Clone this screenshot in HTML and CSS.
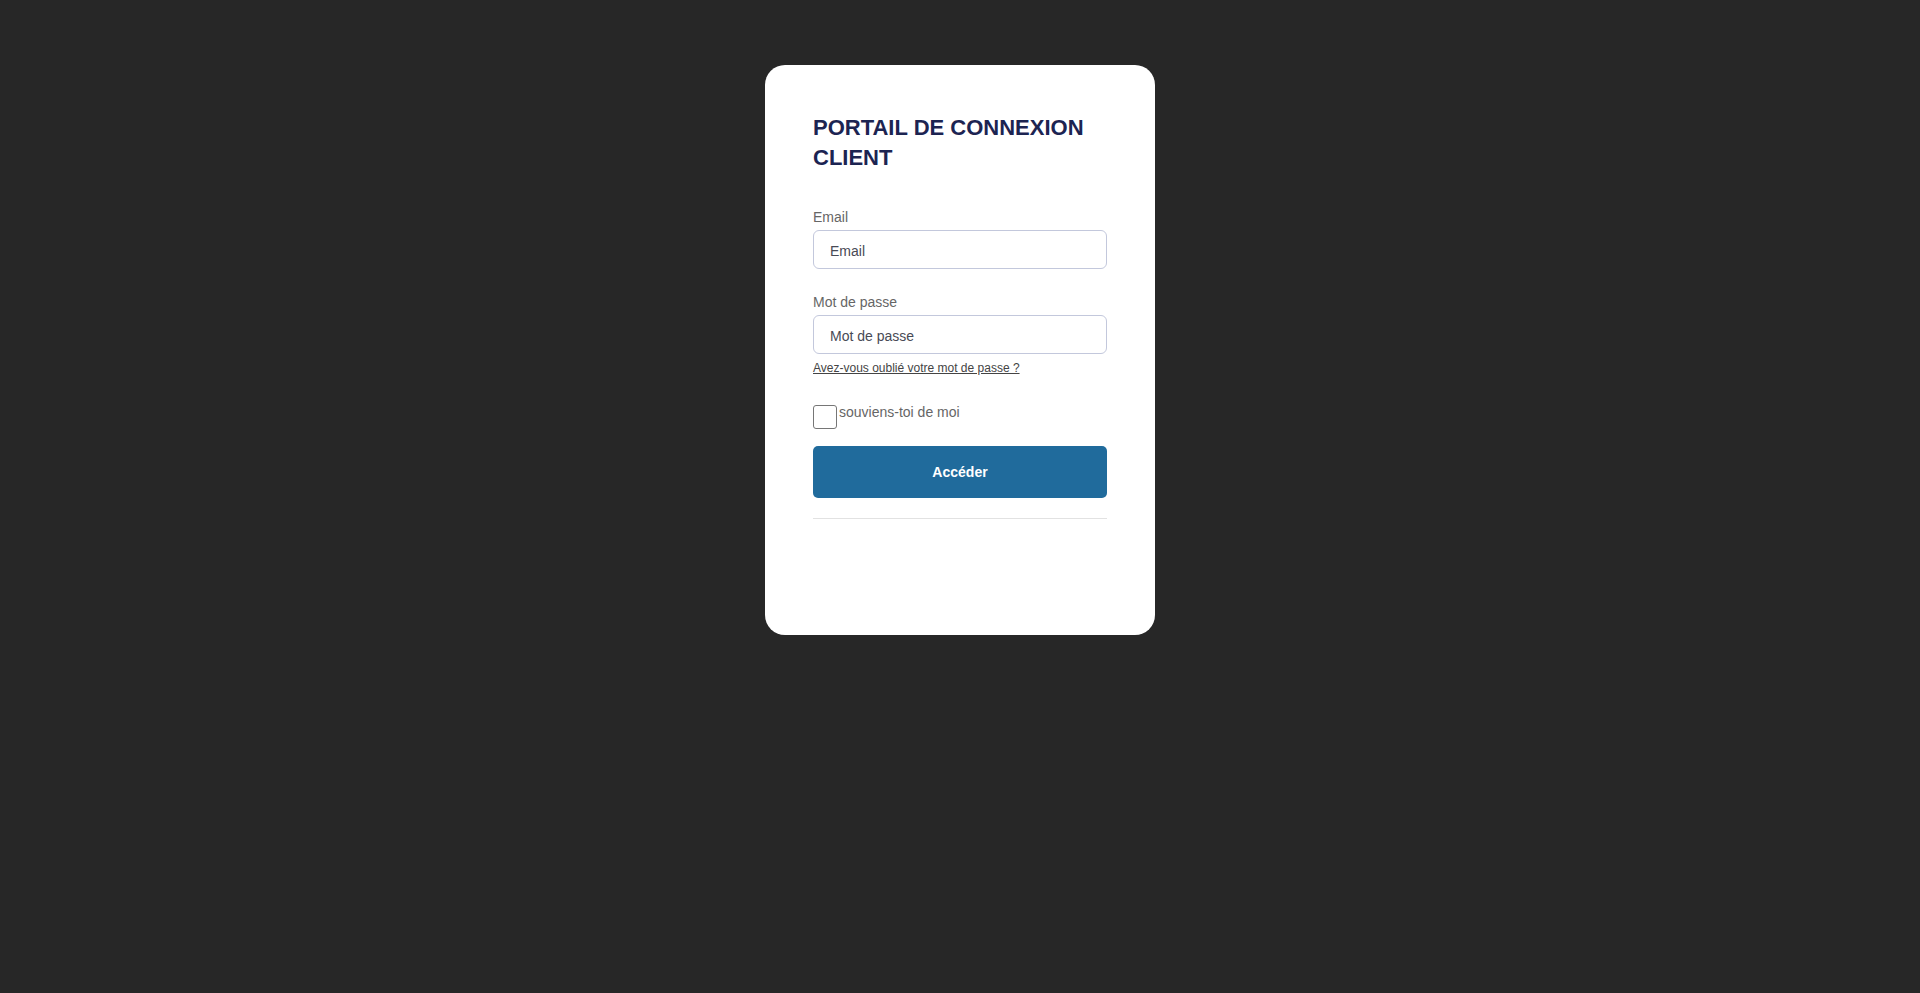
FILE: index.html
```html
<!DOCTYPE html>
<html lang="fr">
<head>
<meta charset="utf-8">
<title>Portail de connexion client</title>
<link rel="stylesheet" href="styles.css">
</head>
<body>
<main class="page">
  <section class="card">
    <h1 class="title">PORTAIL DE CONNEXION CLIENT</h1>
    <form class="form">
      <div class="field">
        <label class="label" for="email">Email</label>
        <input class="input" id="email" type="text" placeholder="Email">
      </div>
      <div class="field field-pass">
        <label class="label" for="pass">Mot de passe</label>
        <input class="input" id="pass" type="password" placeholder="Mot de passe">
        <a class="forgot" href="#">Avez-vous oublié votre mot de passe ?</a>
      </div>
      <div class="remember">
        <input class="check" id="remember" type="checkbox">
        <label class="remember-label" for="remember">souviens-toi de moi</label>
      </div>
      <button class="btn" type="button">Accéder</button>
      <hr class="sep">
    </form>
  </section>
</main>
</body>
</html>
```
FILE: styles.css
```css
* { box-sizing: border-box; }
html, body { margin: 0; padding: 0; }
body {
  background: #272727;
  font-family: "Liberation Sans", Arial, sans-serif;
  min-height: 993px;
}
.page {
  display: flex;
  justify-content: center;
  padding-top: 65px;
}
.card {
  width: 390px;
  height: 570px;
  background: #ffffff;
  border-radius: 20px;
  padding: 48px 48px 0 48px;
}
.title {
  margin: 0;
  font-size: 22px;
  line-height: 30px;
  font-weight: 700;
  color: #1c2452;
}
.form {
  margin-top: 36px;
  display: flex;
  flex-direction: column;
}
.field {
  display: flex;
  flex-direction: column;
}
.field-pass { margin-top: 25px; }
.label {
  font-size: 14px;
  line-height: 16px;
  color: #666666;
  margin-bottom: 5px;
}
.input {
  height: 39px;
  width: 100%;
  border: 1px solid #c3c8dc;
  border-radius: 6px;
  padding: 2px 16px 0 16px;
  font-family: "Liberation Sans", Arial, sans-serif;
  font-size: 14px;
  color: #444;
  outline: none;
}
.input::placeholder { color: #484a55; opacity: 1; }
.forgot {
  margin-top: 7px;
  font-size: 12px;
  line-height: 14px;
  color: #444;
  text-decoration: underline;
  align-self: flex-start;
}
.remember {
  margin-top: 29px;
  display: flex;
  align-items: flex-start;
}
.check {
  appearance: none;
  -webkit-appearance: none;
  margin: 1px 2px 0 0;
  width: 24px;
  height: 24px;
  border: 1px solid #767676;
  border-radius: 3px;
  background: #fff;
}
.remember-label {
  font-size: 14px;
  line-height: 16px;
  color: #666666;
}
.btn {
  margin-top: 17px;
  height: 52px;
  width: 100%;
  border: none;
  border-radius: 5px;
  background: #206b9c;
  color: #ffffff;
  font-family: "Liberation Sans", Arial, sans-serif;
  font-size: 14px;
  font-weight: 700;
}
.sep {
  margin: 20px 0 0 0;
  border: none;
  border-top: 1px solid #e2e2e2;
  height: 0;
}
```
